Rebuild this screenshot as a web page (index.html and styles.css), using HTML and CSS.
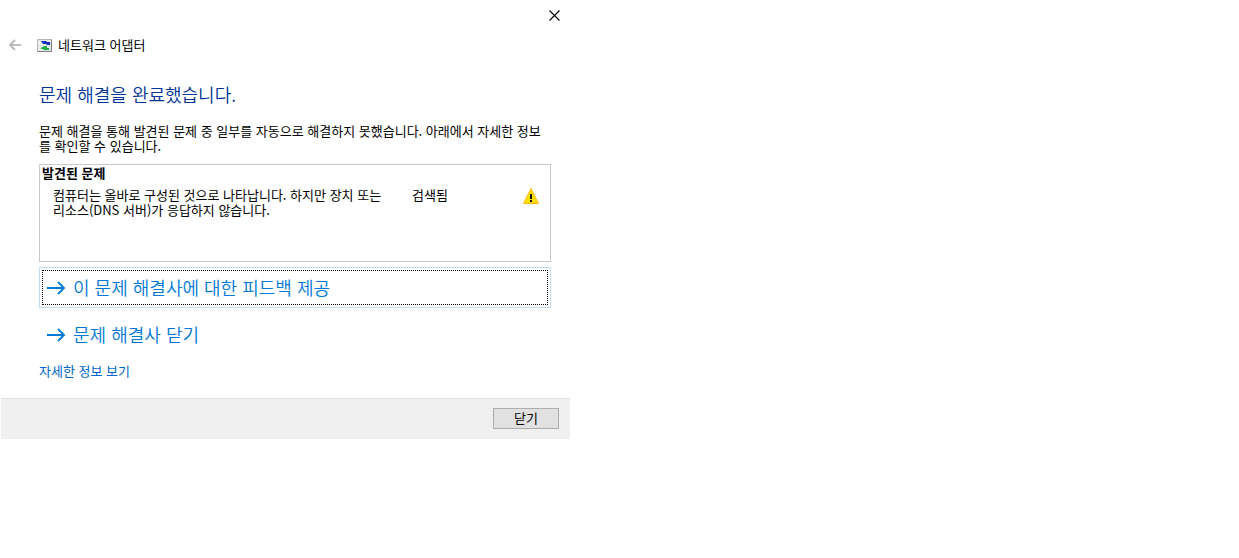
FILE: index.html
```html
<!DOCTYPE html>
<html lang="ko">
<head>
    <meta charset="UTF-8">
    <meta name="viewport" content="width=device-width, initial-scale=1.0">
    <title>네트워크 어댑터</title>
    <link rel="stylesheet" href="styles.css">
</head>
<body>
    <main class="dialog">
        <!-- Title Bar -->
        <div class="titlebar">
            <button class="close-icon" type="button" aria-label="창 닫기">
                <svg width="11" height="11" viewBox="0 0 11 11"><path d="M.5 .5l10 10M10.5 .5l-10 10" stroke="#000" stroke-width="1.1"/></svg>
            </button>
        </div>

        <header class="header">
            <button class="back" type="button" aria-label="뒤로" disabled>
                <svg width="13" height="12" viewBox="0 0 13 12"><path d="M13 6H2M7 1L2 6l5 5" fill="none" stroke="#bababa" stroke-width="1.9"/></svg>
            </button>
            <svg class="app-icon" width="15" height="13" viewBox="0 0 15 13">
                <path d="M.5 .5h14v12H.5z" fill="#e7e8ea" stroke="#b4b8bb"/>
                <path d="M.5 12.5h14V.5" fill="none" stroke="#777d80"/>
                <path d="M4 2h5l1 1h3v3h-3L9 5H6z" fill="#1230c0"/>
                <path d="M4 9l3-2h3v2h2v2H7L6 10H4z" fill="#16ad43"/>
                <path d="M2 3h2v2H2z" fill="#fff"/>
            </svg>
            <span>네트워크 어댑터</span>
        </header>

        <!-- Result -->
        <section class="content">
            <h1>문제 해결을 완료했습니다.</h1>
            <p class="summary">문제 해결을 통해 발견된 문제 중 일부를 자동으로 해결하지 못했습니다. 아래에서 자세한 정보<br>를 확인할 수 있습니다.</p>

            <div class="problems">
                <h2>발견된 문제</h2>
                <div class="problem">
                    <p>컴퓨터는 올바로 구성된 것으로 나타납니다. 하지만 장치 또는<br>리소스(DNS 서버)가 응답하지 않습니다.</p>
                    <span class="status">검색됨</span>
                    <svg class="warning" width="16" height="16" viewBox="0 0 16 16" role="img" aria-label="경고">
                        <path d="M8 .5L15.5 15.5H.5z" fill="#ffde00" stroke="#fdb913" stroke-linejoin="round"/>
                        <path d="M7 6h2v5H7zM7 12h2v2H7z" fill="#111"/>
                    </svg>
                </div>
            </div>

            <button class="command focused" type="button">
                <svg width="19" height="14" viewBox="0 0 19 14"><path d="M0 7h17M11 1l6 6-6 6" fill="none" stroke="#0078d7" stroke-width="1.8"/></svg>
                <span>이 문제 해결사에 대한 피드백 제공</span>
            </button>
            <button class="command" type="button">
                <svg width="19" height="14" viewBox="0 0 19 14"><path d="M0 7h17M11 1l6 6-6 6" fill="none" stroke="#0078d7" stroke-width="1.8"/></svg>
                <span>문제 해결사 닫기</span>
            </button>
            <a class="details" href="#">자세한 정보 보기</a>
        </section>

        <footer class="footer">
            <button class="close" type="button">닫기</button>
        </footer>
    </main>
</body>
</html>
```

FILE: styles.css
```css
* {
    box-sizing: border-box;
}

body {
    margin: 0;
    background-color: #fff;
    color: #000;
    font-family: "Noto Sans CJK KR", "Noto Sans", sans-serif;
    font-size: 13px;
    line-height: 15px;
}

button {
    font: inherit;
    color: inherit;
    cursor: pointer;
}

h1, h2, p {
    margin: 0;
}

svg {
    display: block;
    flex-shrink: 0;
}

.dialog {
    max-width: 569px;
    margin-left: 1px;
}

/* Title Bar */
.titlebar {
    display: flex;
    justify-content: flex-end;
    height: 30px;
}

.close-icon {
    padding: 0 10px;
    border: none;
    background: none;
}

.header {
    display: flex;
    align-items: center;
    height: 30px;
    padding-left: 7px;
}

.back {
    padding: 0;
    border: none;
    background: none;
}

.app-icon {
    margin: 0 6px 0 16px;
}

.header span,
.command span {
    padding-bottom: 2px;
}

/* Result */
.content {
    padding: 22px 19px 20px 38px;
}

h1 {
    color: #003399;
    font-size: 18px;
    font-weight: 350;
    line-height: 24px;
}

.summary {
    margin-top: 17px;
}

.problems {
    min-height: 98px;
    margin: 11px 0 5px;
    padding: 0 2px;
    border: 1px solid #c8c8c8;
}

h2 {
    font-size: 13px;
    line-height: 15px;
}

.problem {
    display: grid;
    grid-template-columns: 359px 1fr 16px;
    margin: 7px 9px 0 11px;
}

.warning {
    margin-top: 1px;
}

/* Command Links */
.command {
    display: flex;
    align-items: center;
    gap: 7px;
    width: 100%;
    height: 41px;
    padding: 0 7px;
    border: 1px solid transparent;
    background: none;
    color: #0078d7;
    font-size: 18px;
    font-weight: 350;
    line-height: 24px;
}

.focused {
    margin-bottom: 6px;
    border-color: #c0dcf3;
    outline: 1px dotted #000;
    outline-offset: -4px;
}

.details {
    display: block;
    width: fit-content;
    margin-top: 8px;
    color: #0066cc;
    text-decoration: none;
}

.footer {
    display: flex;
    justify-content: flex-end;
    padding: 9px 11px 10px;
    border-top: 1px solid #dfdfdf;
    background-color: #f0f0f0;
}

.close {
    width: 66px;
    height: 21px;
    padding: 0 0 2px;
    border: 1px solid #adadad;
    background-color: #e1e1e1;
}
```
